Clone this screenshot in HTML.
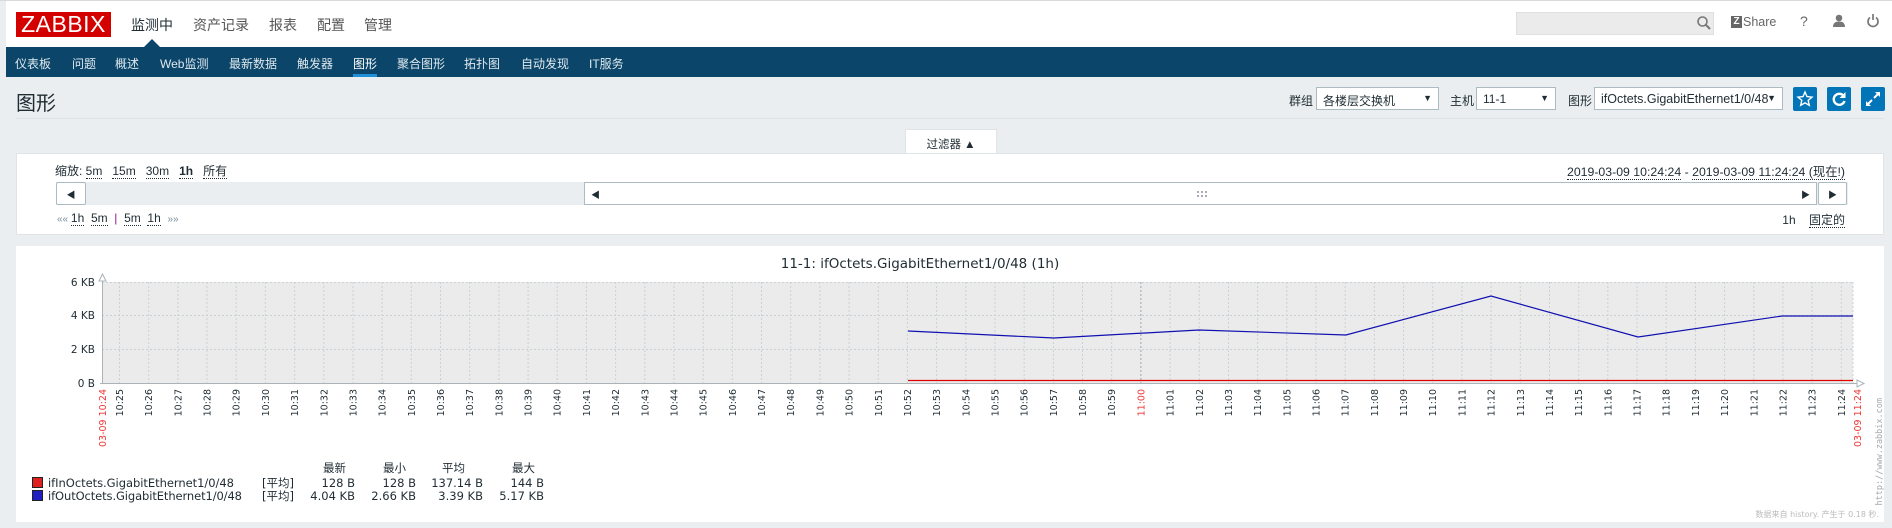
<!DOCTYPE html>
<html><head><meta charset="utf-8"><style>
*{margin:0;padding:0;box-sizing:border-box}
body{width:1892px;height:528px;background:#ebeef0;position:relative;overflow:hidden;font-family:"Liberation Sans","Noto Sans CJK SC",sans-serif;color:#1f2c33;font-size:12px}
.a{position:absolute;white-space:nowrap}
.lnk{border-bottom:1px dotted #1f2c33}
.sel{position:absolute;background:#fff;border:1px solid #acbbc2;height:23px;font-size:12px;padding:4px 0 0 6px}
.sel:after{content:"▼";position:absolute;right:6px;top:5px;font-size:9px}
.btn{position:absolute;top:87px;width:24px;height:24px;background:#0275b8;border-radius:2px}
</style></head><body>
<!-- header -->
<div class="a" style="left:6px;top:1px;width:1886px;height:46px;background:#fff"></div>
<div class="a" style="left:0;top:0;width:1892px;height:1px;background:#d9d9d9"></div>
<div class="a" style="left:16px;top:12px;width:95px;height:25px;background:#d40000;color:#fff;font-size:23px;line-height:25px;text-align:center;letter-spacing:0.5px">ZABBIX</div>
<div class="a" style="left:131px;top:15px;font-size:14px;color:#1f2c33">监测中</div>
<div class="a" style="left:193px;top:15px;font-size:14px;color:#555">资产记录</div>
<div class="a" style="left:269px;top:15px;font-size:14px;color:#555">报表</div>
<div class="a" style="left:317px;top:15px;font-size:14px;color:#555">配置</div>
<div class="a" style="left:364px;top:15px;font-size:14px;color:#555">管理</div>
<div class="a" style="left:144px;top:39px;width:0;height:0;border-left:8px solid transparent;border-right:8px solid transparent;border-bottom:8px solid #0b466a"></div>
<div class="a" style="left:1516px;top:12px;width:198px;height:23px;background:#ebebeb;border:1px solid #e0e0e0"></div>
<svg class="a" style="left:1696px;top:15px" width="16" height="16" viewBox="0 0 16 16"><circle cx="6.5" cy="6.5" r="4.5" fill="none" stroke="#777" stroke-width="1.6"/><path d="M10 10l4 4" stroke="#777" stroke-width="2"/></svg>
<div class="a" style="left:1731px;top:16px;width:11px;height:12px;background:#666;color:#fff;font-size:10px;font-weight:bold;line-height:12px;text-align:center">Z</div>
<div class="a" style="left:1743px;top:15px;font-size:12.5px;color:#666">Share</div>
<div class="a" style="left:1800px;top:13px;font-size:14px;color:#666">?</div>
<svg class="a" style="left:1832px;top:14px" width="14" height="14" viewBox="0 0 14 14"><circle cx="7" cy="4" r="3.3" fill="#777"/><path d="M1 13c0-4 2.5-5.5 6-5.5s6 1.5 6 5.5z" fill="#777"/></svg>
<svg class="a" style="left:1866px;top:13px" width="14" height="15" viewBox="0 0 14 15"><path d="M4 4.5a5 5 0 1 0 6 0" fill="none" stroke="#777" stroke-width="1.7"/><path d="M7 1v6" stroke="#777" stroke-width="1.7"/></svg>
<!-- nav -->
<div class="a" style="left:6px;top:47px;width:1886px;height:30px;background:#0b466a"></div>
<div class="a" style="top:55px;left:0;font-size:12px;color:#dfe8ee">
<span class="a" style="left:15px">仪表板</span><span class="a" style="left:72px">问题</span><span class="a" style="left:115px">概述</span><span class="a" style="left:160px">Web监测</span><span class="a" style="left:229px">最新数据</span><span class="a" style="left:297px">触发器</span><span class="a" style="left:353px;color:#fff">图形</span><span class="a" style="left:397px">聚合图形</span><span class="a" style="left:464px">拓扑图</span><span class="a" style="left:521px">自动发现</span><span class="a" style="left:589px">IT服务</span></div>
<div class="a" style="left:353px;top:74px;width:24px;height:3px;background:#1f8fd8"></div>
<!-- title -->
<div class="a" style="left:16px;top:87px;font-size:20px;color:#1f2c33">图形</div>
<div class="a" style="left:16px;top:118px;width:1868px;height:1px;background:#dde2e5"></div>
<div class="a" style="left:1289px;top:92px">群组</div>
<div class="sel" style="left:1316px;top:87px;width:123px">各楼层交换机</div>
<div class="a" style="left:1450px;top:92px">主机</div>
<div class="sel" style="left:1476px;top:87px;width:80px">11-1</div>
<div class="a" style="left:1568px;top:92px">图形</div>
<div class="sel" style="left:1594px;top:87px;width:189px;font-size:12.5px">ifOctets.GigabitEthernet1/0/48</div>
<div class="btn" style="left:1793px"><svg width="24" height="24" viewBox="0 0 24 24"><path d="M12 5l2 4.6 5 .5-3.8 3.3 1.1 4.9L12 15.8 7.7 18.3l1.1-4.9L5 10.1l5-.5z" fill="none" stroke="#fff" stroke-width="1.4"/></svg></div>
<div class="btn" style="left:1827px"><svg width="24" height="24" viewBox="0 0 24 24"><path d="M17 9.5A5.5 5.5 0 1 0 17.5 14" fill="none" stroke="#fff" stroke-width="2.4"/><path d="M18.5 5v6h-6z" fill="#fff"/></svg></div>
<div class="btn" style="left:1861px"><svg width="24" height="24" viewBox="0 0 24 24"><path d="M13 11l5-5M11 13l-5 5" stroke="#fff" stroke-width="2"/><path d="M14 5h5v5zM5 14v5h5z" fill="#fff"/></svg></div>
<!-- filter tab -->
<div class="a" style="left:905px;top:129px;width:92px;height:25px;background:#fff;border:1px solid #dfe4e7;border-bottom:none;text-align:center;padding-top:6px;font-size:11.5px">过滤器 ▲</div>
<div class="a" style="left:16px;top:153px;width:1868px;height:82px;background:#fff;border:1px solid #dfe4e7"></div>
<div class="a" style="left:55px;top:162px;font-size:12px">缩放: <span class="lnk">5m</span>&nbsp;&nbsp; <span class="lnk">15m</span>&nbsp;&nbsp; <span class="lnk">30m</span>&nbsp;&nbsp; <b class="lnk">1h</b>&nbsp;&nbsp; <span class="lnk">所有</span></div>
<div class="a" style="right:47px;top:162px;font-size:12.3px"><span class="lnk">2019-03-09 10:24:24</span> - <span class="lnk">2019-03-09 11:24:24 (现在!)</span></div>
<div class="a" style="left:56px;top:182px;width:1792px;height:23px;background:#ebeef0"></div>
<div class="a" style="left:56px;top:182px;width:30px;height:23px;background:#fff;border:1px solid #acbbc2;border-radius:2px;font-size:9px;text-align:center;padding-top:5px">◀</div>
<div class="a" style="left:584px;top:182px;width:1233px;height:23px;background:#fff;border:1px solid #acbbc2;font-size:9px;padding-top:5px"><span class="a" style="left:6px">◀</span>
<svg class="a" style="left:612px;top:8px" width="10" height="6"><g fill="#aab"><rect x="0" y="0" width="2" height="2"/><rect x="4" y="0" width="2" height="2"/><rect x="8" y="0" width="2" height="2"/><rect x="0" y="4" width="2" height="2"/><rect x="4" y="4" width="2" height="2"/><rect x="8" y="4" width="2" height="2"/></g></svg>
<span class="a" style="right:6px">▶</span></div>
<div class="a" style="left:1818px;top:182px;width:29px;height:23px;background:#fff;border:1px solid #acbbc2;border-radius:2px;font-size:9px;text-align:center;padding-top:5px">▶</div>
<div class="a" style="left:57px;top:211px;font-size:12px"><span style="color:#768d99;font-size:10px">«« </span> <span class="lnk">1h</span>&nbsp; <span class="lnk">5m</span>&nbsp; <span style="color:#8b1c8b">|</span>&nbsp; <span class="lnk">5m</span>&nbsp; <span class="lnk">1h</span>&nbsp; <span style="color:#768d99;font-size:10px"> »»</span></div>
<div class="a" style="right:47px;top:211px;font-size:12px">1h&nbsp;&nbsp;&nbsp; <span class="lnk">固定的</span></div>
<!-- graph -->
<div class="a" style="left:16px;top:246px;width:1868px;height:276px;background:#fff"></div>
<svg class="a" style="left:0;top:0" width="1892" height="528" font-family="DejaVu Sans, sans-serif">
<text x="920" y="268" text-anchor="middle" font-size="13.5" fill="#1f2c33">11-1: ifOctets.GigabitEthernet1/0/48 (1h)</text>
<rect x="102" y="282" width="1751" height="101" fill="#ebebeb"/>
<g stroke="#c9d1d6" stroke-dasharray="2,2" stroke-width="1">
<path d="M102 282.5H1853M102 315.5H1853M102 349.5H1853"/>
<path d="M119.5 282V383M148.7 282V383M177.9 282V383M207 282V383M236.2 282V383M265.4 282V383M294.6 282V383M323.8 282V383M353 282V383M382.1 282V383M411.3 282V383M440.5 282V383M469.7 282V383M498.9 282V383M528.1 282V383M557.2 282V383M586.4 282V383M615.6 282V383M644.8 282V383M674 282V383M703.2 282V383M732.3 282V383M761.5 282V383M790.7 282V383M819.9 282V383M849.1 282V383M878.3 282V383M907.4 282V383M936.6 282V383M965.8 282V383M995 282V383M1024.2 282V383M1053.4 282V383M1082.5 282V383M1111.7 282V383M1170.1 282V383M1199.3 282V383M1228.5 282V383M1257.6 282V383M1286.8 282V383M1316 282V383M1345.2 282V383M1374.4 282V383M1403.6 282V383M1432.7 282V383M1461.9 282V383M1491.1 282V383M1520.3 282V383M1549.5 282V383M1578.7 282V383M1607.8 282V383M1637 282V383M1666.2 282V383M1695.4 282V383M1724.6 282V383M1753.8 282V383M1782.9 282V383M1812.1 282V383M1841.3 282V383M1853 282V383"/>
</g>
<path d="M1140.9 282V383" stroke="#9aa8b0" stroke-dasharray="2,2"/>
<path d="M908 380.5H1853" stroke="#e00000" stroke-width="1.3"/>
<path d="M908 331L1054 338L1199 330L1346 335L1491 296L1638 337L1782 316L1853 316" fill="none" stroke="#1010b0" stroke-width="1.2"/>
<path d="M102.5 280V384M100 383.5H1858" stroke="#a9b3b8" stroke-width="1"/>
<path d="M99 281l3.5-7 3.5 7z" fill="#fff" stroke="#a9b3b8"/>
<path d="M1857 380l7 3.5-7 3.5z" fill="#fff" stroke="#a9b3b8"/>
<g font-size="10.5" fill="#1f2c33" text-anchor="end">
<text x="95" y="286">6 KB</text><text x="95" y="319">4 KB</text><text x="95" y="353">2 KB</text><text x="95" y="387">0 B</text>
</g>
<g font-size="9.5" fill="#1f2c33" text-anchor="end">
<text transform="translate(123,389) rotate(-90)">10:25</text><text transform="translate(152.2,389) rotate(-90)">10:26</text><text transform="translate(181.4,389) rotate(-90)">10:27</text><text transform="translate(210.5,389) rotate(-90)">10:28</text><text transform="translate(239.7,389) rotate(-90)">10:29</text><text transform="translate(268.9,389) rotate(-90)">10:30</text><text transform="translate(298.1,389) rotate(-90)">10:31</text><text transform="translate(327.3,389) rotate(-90)">10:32</text><text transform="translate(356.5,389) rotate(-90)">10:33</text><text transform="translate(385.6,389) rotate(-90)">10:34</text><text transform="translate(414.8,389) rotate(-90)">10:35</text><text transform="translate(444,389) rotate(-90)">10:36</text><text transform="translate(473.2,389) rotate(-90)">10:37</text><text transform="translate(502.4,389) rotate(-90)">10:38</text><text transform="translate(531.6,389) rotate(-90)">10:39</text><text transform="translate(560.7,389) rotate(-90)">10:40</text><text transform="translate(589.9,389) rotate(-90)">10:41</text><text transform="translate(619.1,389) rotate(-90)">10:42</text><text transform="translate(648.3,389) rotate(-90)">10:43</text><text transform="translate(677.5,389) rotate(-90)">10:44</text><text transform="translate(706.7,389) rotate(-90)">10:45</text><text transform="translate(735.8,389) rotate(-90)">10:46</text><text transform="translate(765,389) rotate(-90)">10:47</text><text transform="translate(794.2,389) rotate(-90)">10:48</text><text transform="translate(823.4,389) rotate(-90)">10:49</text><text transform="translate(852.6,389) rotate(-90)">10:50</text><text transform="translate(881.8,389) rotate(-90)">10:51</text><text transform="translate(910.9,389) rotate(-90)">10:52</text><text transform="translate(940.1,389) rotate(-90)">10:53</text><text transform="translate(969.3,389) rotate(-90)">10:54</text><text transform="translate(998.5,389) rotate(-90)">10:55</text><text transform="translate(1027.7,389) rotate(-90)">10:56</text><text transform="translate(1056.9,389) rotate(-90)">10:57</text><text transform="translate(1086,389) rotate(-90)">10:58</text><text transform="translate(1115.2,389) rotate(-90)">10:59</text><text transform="translate(1144.4,389) rotate(-90)" fill="#e33">11:00</text><text transform="translate(1173.6,389) rotate(-90)">11:01</text><text transform="translate(1202.8,389) rotate(-90)">11:02</text><text transform="translate(1232,389) rotate(-90)">11:03</text><text transform="translate(1261.1,389) rotate(-90)">11:04</text><text transform="translate(1290.3,389) rotate(-90)">11:05</text><text transform="translate(1319.5,389) rotate(-90)">11:06</text><text transform="translate(1348.7,389) rotate(-90)">11:07</text><text transform="translate(1377.9,389) rotate(-90)">11:08</text><text transform="translate(1407.1,389) rotate(-90)">11:09</text><text transform="translate(1436.2,389) rotate(-90)">11:10</text><text transform="translate(1465.4,389) rotate(-90)">11:11</text><text transform="translate(1494.6,389) rotate(-90)">11:12</text><text transform="translate(1523.8,389) rotate(-90)">11:13</text><text transform="translate(1553,389) rotate(-90)">11:14</text><text transform="translate(1582.2,389) rotate(-90)">11:15</text><text transform="translate(1611.3,389) rotate(-90)">11:16</text><text transform="translate(1640.5,389) rotate(-90)">11:17</text><text transform="translate(1669.7,389) rotate(-90)">11:18</text><text transform="translate(1698.9,389) rotate(-90)">11:19</text><text transform="translate(1728.1,389) rotate(-90)">11:20</text><text transform="translate(1757.3,389) rotate(-90)">11:21</text><text transform="translate(1786.4,389) rotate(-90)">11:22</text><text transform="translate(1815.6,389) rotate(-90)">11:23</text><text transform="translate(1844.8,389) rotate(-90)">11:24</text>
<text transform="translate(106,389) rotate(-90)" fill="#e33">03-09 10:24</text>
<text transform="translate(1861,389) rotate(-90)" fill="#e33">03-09 11:24</text>
<text transform="translate(1882,398) rotate(-90)" fill="#aaa" font-size="8.5" font-family="DejaVu Sans Mono, monospace">http://www.zabbix.com</text>
</g>
<rect x="32.5" y="477.5" width="10" height="10" fill="#dd2020" stroke="#222"/>
<rect x="32.5" y="490.5" width="10" height="10" fill="#2020c0" stroke="#222"/>
<g font-size="11.5" fill="#1f2c33">
<text x="48" y="487" textLength="186">ifInOctets.GigabitEthernet1/0/48</text>
<text x="48" y="500" textLength="194">ifOutOctets.GigabitEthernet1/0/48</text>
<text x="262" y="487">[平均]</text><text x="262" y="500">[平均]</text>
<g text-anchor="end">
<text x="346" y="472">最新</text><text x="406" y="472">最小</text><text x="465" y="472">平均</text><text x="535" y="472">最大</text>
<text x="355" y="487">128 B</text><text x="416" y="487">128 B</text><text x="483" y="487">137.14 B</text><text x="544" y="487">144 B</text>
<text x="355" y="500">4.04 KB</text><text x="416" y="500">2.66 KB</text><text x="483" y="500">3.39 KB</text><text x="544" y="500">5.17 KB</text>
</g></g>
<text x="1879" y="517" text-anchor="end" font-size="8" fill="#bbb">数据来自 history. 产生于 0.18 秒.</text>
</svg>
</body></html>
